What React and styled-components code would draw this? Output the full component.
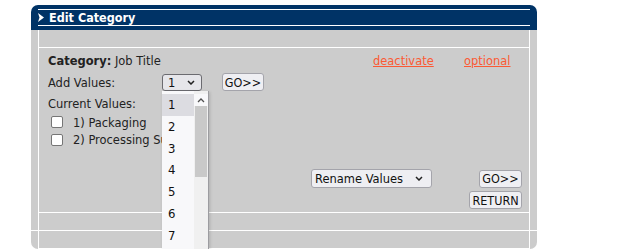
import React from "react";
import styled, { createGlobalStyle } from "styled-components";

const GlobalStyle = createGlobalStyle`
  html, body {
    margin: 0;
    padding: 0;
    overflow: hidden;
    background: #fff;
  }
  body {
    font-family: "DejaVu Sans Condensed", "Liberation Sans", sans-serif;
    font-size: 12.75px;
    color: #222;
  }
`;

const Page = styled.div`
  padding: 5px 0 0 31px;
`;

const Frame = styled.div`
  position: relative;
  width: 506px;
  display: flex;
  flex-direction: column;
`;

const Header = styled.div`
  background: #003366;
  border-radius: 7px 7px 0 0;
  padding: 4px 7px;
`;

const HeaderBand = styled.div`
  display: flex;
  align-items: center;
  gap: 5px;
  height: 15px;
  border-top: 1px solid #fff;
  border-bottom: 1px solid #fff;
  color: #fff;
  font-weight: bold;
  font-size: 12.5px;
`;

const Body = styled.div`
  display: flex;
  height: 200px;
`;

const Strip = styled.div`
  width: 7px;
  background: #ccc;
`;

const Main = styled.div`
  flex: 1;
  display: flex;
  flex-direction: column;
  border-left: 1px solid #fff;
  border-right: 1px solid #fff;
`;

const Band = styled.div`
  height: 17px;
  background: #ccc;
`;

const Rule = styled.div`
  height: 1px;
  background: #fff;
`;

const Footer = styled.div`
  display: flex;
  height: 18px;
  border-radius: 0 0 7px 7px;
  overflow: hidden;
`;

const Content = styled.div`
  box-sizing: border-box;
  height: 164px;
  background: #ccc;
  padding: 2px 7px 3px 9px;
  display: flex;
  flex-direction: column;
`;

const InfoRow = styled.div`
  display: grid;
  grid-template-columns: 325px 91px auto;
  align-items: center;
  height: 20px;
`;

const Row = styled.div`
  display: flex;
  align-items: center;
  height: ${(p) => p.$h}px;
  margin-top: ${(p) => p.$mt || 0}px;
  justify-content: ${(p) => (p.$end ? "flex-end" : "flex-start")};
`;

const Label = styled.span`
  width: 114px;
`;

const CheckRow = styled.label`
  display: flex;
  align-items: center;
  gap: 10px;
  height: ${(p) => p.$h}px;
  padding-left: 3px;
  white-space: nowrap;
`;

const Check = styled.input.attrs({ type: "checkbox" })`
  appearance: none;
  margin: 0;
  width: 12px;
  height: 12px;
  background: #fff;
  border: 1px solid #767676;
  border-radius: 2px;
`;

const Link = styled.a`
  color: #fb5a34;
  text-decoration: underline;
`;

const SelectBox = styled.div`
  box-sizing: border-box;
  display: flex;
  align-items: center;
  justify-content: space-between;
  width: ${(p) => p.$w}px;
  height: ${(p) => p.$h}px;
  padding: 0 ${(p) => p.$pr}px 0 ${(p) => p.$pl}px;
  background: ${(p) => (p.$open ? "#e6e6ea" : "#eeeef2")};
  border: 1px solid ${(p) => (p.$open ? "#6b6b70" : "#a4a4ab")};
  border-radius: 3px;
  color: #111;
`;

const Button = styled.button`
  box-sizing: border-box;
  width: ${(p) => p.$w}px;
  height: 18px;
  margin-left: ${(p) => p.$ml || 0}px;
  padding: 0;
  font: inherit;
  font-size: 12.5px;
  color: #111;
  background: #efeff3;
  border: 1px solid #a4a4ab;
  border-radius: 3px;
`;

const Listbox = styled.div`
  position: absolute;
  left: 131px;
  top: 86px;
  width: 47px;
  height: 158px;
  overflow: hidden;
  display: flex;
  background: #f8f8fa;
  border-right: 1px solid #9c9ca0;
  box-sizing: border-box;
  box-shadow: 1px 1px 3px rgba(0, 0, 0, 0.15);
`;

const Options = styled.div`
  flex: 1;
  padding-top: 3px;
`;

const Option = styled.div`
  height: 21.75px;
  line-height: 21.75px;
  padding-left: 6px;
  font-size: 13px;
  color: #111;
  background: ${(p) => (p.$active ? "#dcdce1" : "transparent")};
`;

const Scrollbar = styled.div`
  width: 14px;
  padding-top: 3px;
  display: flex;
  flex-direction: column;
  background: #f0f0f0;
`;

const ScrollArrow = styled.div`
  height: 12px;
  display: flex;
  align-items: center;
  justify-content: center;
  background: #f8f8fa;
`;

const Thumb = styled.div`
  height: 71px;
  margin: 0 1px;
  background: #c9c9c9;
`;

const Chevron = ({ color = "#222" }) => (
  <svg width="8" height="5" viewBox="0 0 8 5">
    <polyline points="1,1 4,4 7,1" fill="none" stroke={color} strokeWidth="1.5" />
  </svg>
);

const Arrow = () => (
  <svg width="6" height="9" viewBox="0 0 6 9">
    <polygon points="0,0 6,4.5 0,9 1.5,4.5" fill="#fff" />
  </svg>
);

const App = () => {
  const options = [1, 2, 3, 4, 5, 6, 7];
  return (
    <Page>
      <GlobalStyle />
      <Frame>
        <Header>
          <HeaderBand>
            <Arrow />
            <span>Edit Category</span>
          </HeaderBand>
        </Header>
        <Body>
          <Strip />
          <Main>
            <Band />
            <Rule />
            <Content>
              <InfoRow>
                <span>
                  <b>Category:</b> Job Title
                </span>
                <span>
                  <Link href="#">deactivate</Link>
                </span>
                <span>
                  <Link href="#">optional</Link>
                </span>
              </InfoRow>
              <Row $h={22} $mt={1}>
                <Label>Add Values:</Label>
                <SelectBox $open $w={40} $h={17} $pl={5} $pr={6}>
                  <span>1</span>
                  <Chevron />
                </SelectBox>
                <Button $w={42} $ml={20}>
                  GO&gt;&gt;
                </Button>
              </Row>
              <Row $h={20}>Current Values:</Row>
              <CheckRow $h={18}>
                <Check />
                <span>1) Packaging</span>
              </CheckRow>
              <CheckRow $h={17}>
                <Check />
                <span>2) Processing Support</span>
              </CheckRow>
              <Row $h={19} $mt={21} $end>
                <SelectBox $w={121} $h={19} $pl={3} $pr={8}>
                  <span>Rename Values</span>
                  <Chevron />
                </SelectBox>
                <Button $w={43} $ml={47}>
                  GO&gt;&gt;
                </Button>
              </Row>
              <Row $h={18} $mt={3} $end>
                <Button $w={53}>RETURN</Button>
              </Row>
            </Content>
            <Rule />
            <Band />
          </Main>
          <Strip />
        </Body>
        <Rule />
        <Footer>
          <Strip />
          <Main>
            <Band />
          </Main>
          <Strip />
        </Footer>
        <Listbox>
          <Options>
            {options.map((n) => (
              <Option key={n} $active={n === 1}>
                {n}
              </Option>
            ))}
          </Options>
          <Scrollbar>
            <ScrollArrow>
              <svg width="8" height="5" viewBox="0 0 8 5">
                <polyline points="1,4 4,1 7,4" fill="none" stroke="#505050" strokeWidth="1.3" />
              </svg>
            </ScrollArrow>
            <Thumb />
          </Scrollbar>
        </Listbox>
      </Frame>
    </Page>
  );
};

export default App;
